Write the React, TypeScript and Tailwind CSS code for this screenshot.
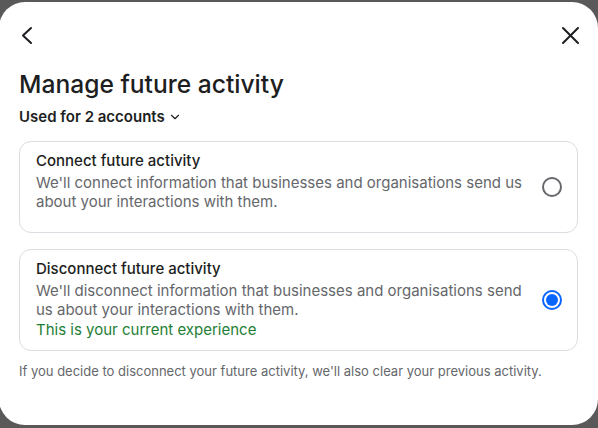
import { ChevronDown } from "lucide-react";

const options = [
  {
    title: "Connect future activity",
    body: "We'll connect information that businesses and organisations send us about your interactions with them.",
    selected: false,
    pad: "pb-[21px]",
  },
  {
    title: "Disconnect future activity",
    body: "We'll disconnect information that businesses and organisations send us about your interactions with them.",
    selected: true,
    note: "This is your current experience",
    pad: "pb-[11px]",
  },
];

function Radio({ checked }: { checked: boolean }) {
  if (checked) {
    return (
      <span className="flex h-[20px] w-[20px] shrink-0 items-center justify-center rounded-full border-2 border-[#0866ff]">
        <span className="h-[12px] w-[12px] rounded-full bg-[#0866ff]" />
      </span>
    );
  }
  return <span className="h-[20px] w-[20px] shrink-0 rounded-full border-2 border-[#65676b]" />;
}

export default function App() {
  return (
    <div className="h-[428px] w-[598px] overflow-hidden bg-[#595959] pt-[2px] font-['Inter',sans-serif]">
      <div className="-ml-[1px] h-[423px] w-[599px] rounded-[26px] bg-white px-[20px] text-[#1c1e21]">
        {/* header icons */}
        <div className="flex h-[68px] items-start justify-between pt-[24px]">
          <svg width="14" height="19" viewBox="0 0 14 19" className="ml-[1px]">
            <polyline points="11,2 3,9.5 11,17" fill="none" stroke="#1c1e21" strokeWidth="2" strokeLinecap="round" strokeLinejoin="round" />
          </svg>
          <svg width="19" height="19" viewBox="0 0 19 19" className="-mr-[2px]">
            <path d="M2 2 17 17M17 2 2 17" fill="none" stroke="#1c1e21" strokeWidth="2" strokeLinecap="round" />
          </svg>
        </div>

        <h1 className="text-[24.6px] font-medium leading-[28px]">Manage future activity</h1>
        <button className="mt-[9px] flex items-center gap-[3px] text-[15px] font-semibold leading-[20px]">
          Used for 2 accounts
          <ChevronDown size={14} strokeWidth={2} />
        </button>

        {/* options */}
        <div className="mt-[14px] flex flex-col gap-[16px]">
          {options.map((o) => (
            <div
              key={o.title}
              className="flex items-center gap-[16px] rounded-[12px] border border-[#dadde1] pl-[16px] pr-[15px]"
            >
              <div className={`flex-1 pt-[9px] ${o.pad}`}>
                <div className="text-[15px] font-medium leading-[20px]">{o.title}</div>
                <div className="mt-[2px] text-[15px] leading-[19px] text-[#65676b]">{o.body}</div>
                {o.note && (
                  <div className="mt-[1px] text-[15px] leading-[19px] text-[#1e7e34]">{o.note}</div>
                )}
              </div>
              <Radio checked={o.selected} />
            </div>
          ))}
        </div>

        <p className="mt-[11px] text-[13px] leading-[18px] text-[#65676b]">
          If you decide to disconnect your future activity, we'll also clear your previous activity.
        </p>
      </div>
    </div>
  );
}
